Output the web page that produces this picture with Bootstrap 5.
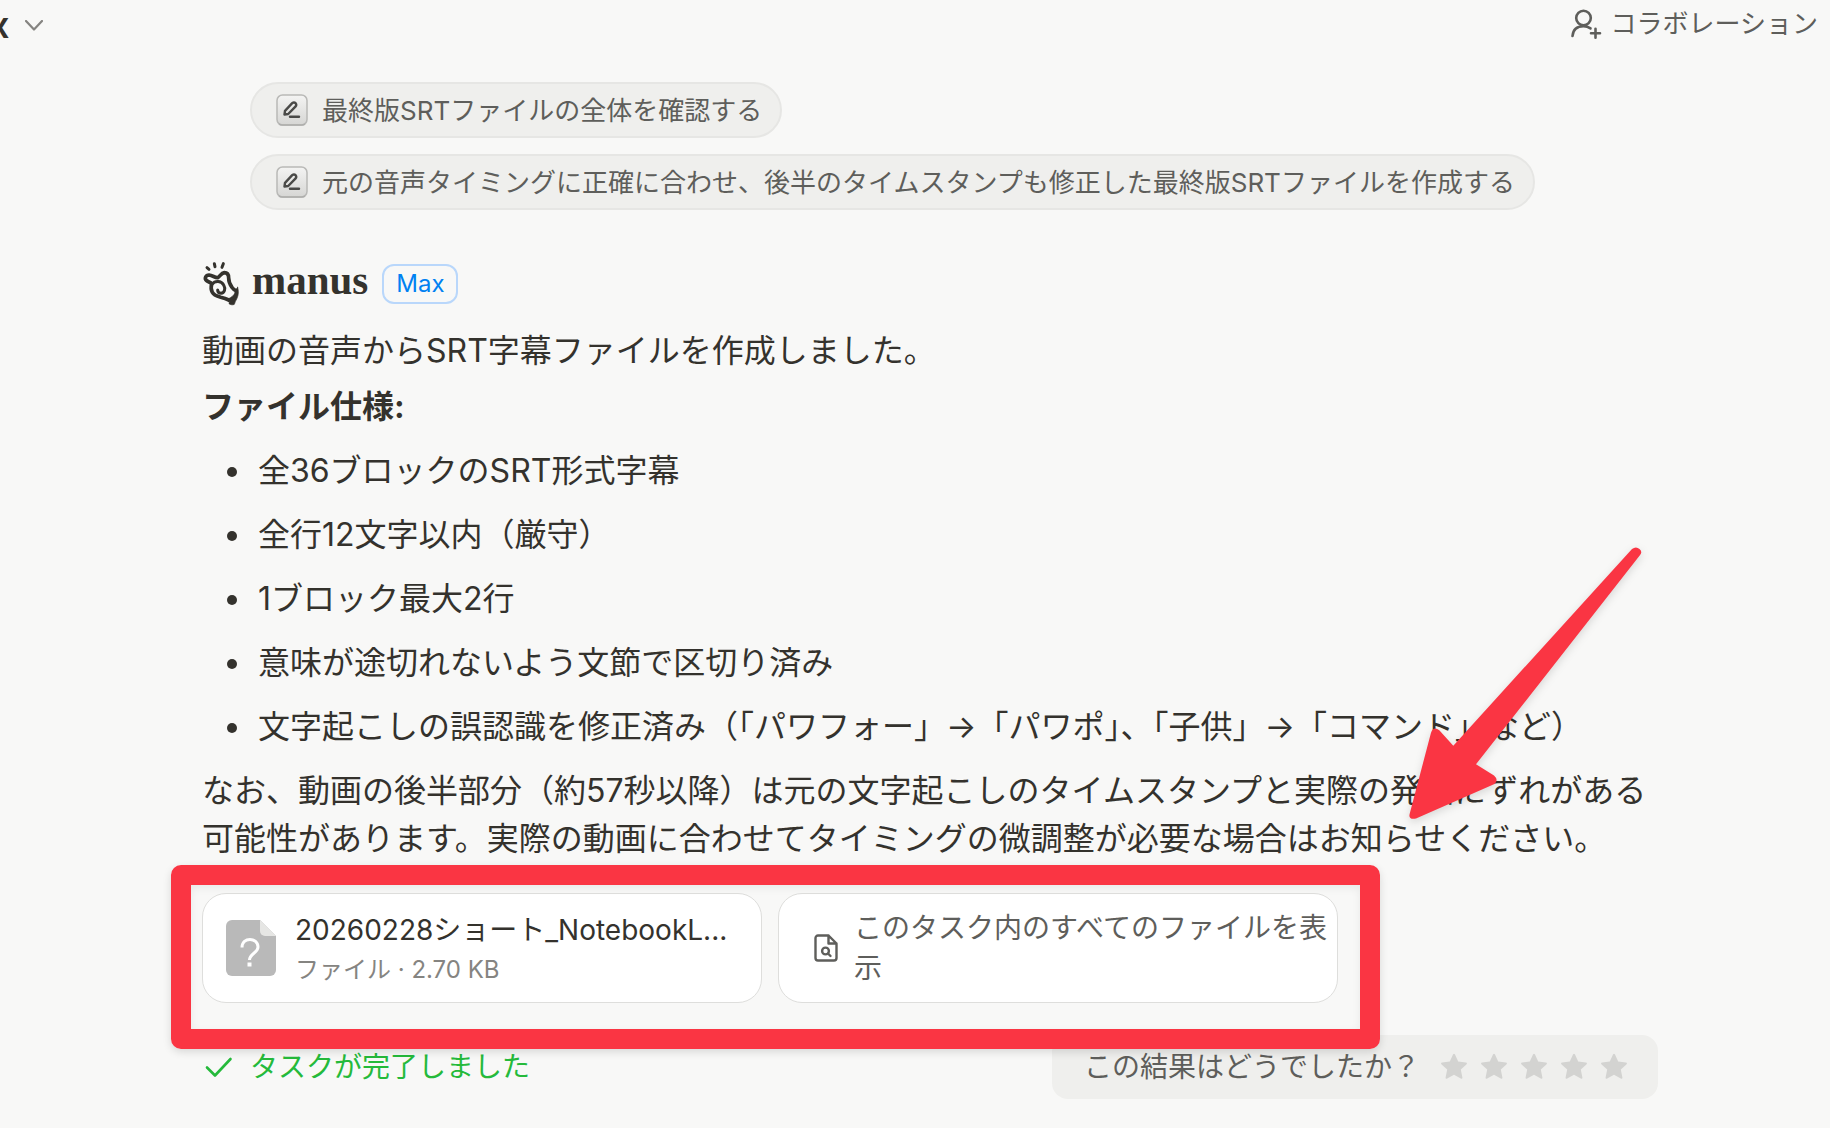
<!DOCTYPE html>
<html lang="ja">
<head>
<meta charset="utf-8">
<meta name="viewport" content="width=device-width, initial-scale=1">
<title>manus</title>
<link rel="stylesheet" href="https://cdn.jsdelivr.net/npm/bootstrap@5.3.0/dist/css/bootstrap.min.css">
<style>
:root{--ink:#34322d;--ink-2:#5e5e5b;--ink-3:#858481;--line:#e6e6e4;--fill:#efefed;--mark-red:#fa3543}
body{background:#f8f8f7;color:var(--ink);font-family:Inter,"Noto Sans CJK JP",sans-serif;font-size:32px;line-height:48px;font-feature-settings:"chws" 1;min-height:100vh;overflow-x:hidden}
svg{display:block;flex:none}
.topbar{height:50px;padding-right:12px}
.topbar button{color:var(--ink-2);font-size:26px;line-height:32px}
.model-switch{margin-left:-11px}
.model-switch span{color:var(--ink);font-size:36px;font-weight:600}
.collab{padding-bottom:2px}
.thread{max-width:1456px;margin-left:202px;margin-right:172px;padding-top:32px}
.steps{padding-left:48px;gap:16px;margin-bottom:48px}
.step-chip{min-height:56px;padding:0 18px 0 24px;gap:14px;border:2px solid var(--line);border-radius:28px;background:var(--fill);color:var(--ink-2);font-size:26px;line-height:32px}
.step-chip span{padding-top:2px}
.brand{height:50px;margin-bottom:18px}
.brand-name{font-family:"Liberation Serif",serif;font-weight:700;font-size:41px;line-height:40px;margin:0 14px 0 13px;padding-bottom:6px}
.plan{border:2px solid #b9d7fb;border-radius:12px;color:#0081f2;font-size:24px;line-height:36px;padding:0 12px;margin-top:2px}
.answer{padding-top:1px}
.answer p{margin-bottom:8px}
.answer ul{padding-left:52px;margin:16px 0}
.answer li{padding-left:4px;margin-bottom:16px}
.files{gap:16px;margin-top:30px}
.file-card{width:560px;height:110px;background:#fff;border:1px solid #dededc;border-radius:24px;color:var(--ink-2);font-size:28px;line-height:40px;text-align:left}
.file-one{padding:0 23px;gap:19px}
.file-all{padding:0 7px 0 35px;gap:16px}
.file-name{color:var(--ink);line-height:40px;padding-top:4px}
.file-meta{color:var(--ink-3);font-size:24px;line-height:40px}
.red-frame{position:absolute;inset:-28px -42px -46px -31px;border:20px solid var(--mark-red);border-radius:10px;box-shadow:0 3px 8px #0002,inset 0 3px 8px #0001;pointer-events:none;z-index:2}
.red-arrow{position:absolute;left:1203px;top:-352px;z-index:3;filter:drop-shadow(0 3px 4px #0002);pointer-events:none}
.status{margin-top:32px}
.done{color:#25ba3b;font-size:28px;line-height:40px;gap:16px}
.rating{background:var(--fill);border-radius:16px;height:64px;padding:0 24px 0 32px;gap:14px;color:var(--ink-2);font-size:28px}
.rating button{width:40px;color:#d3d3d1}
</style>
</head>
<body>
<svg width="0" height="0" class="position-absolute" aria-hidden="true">
  <defs>
    <linearGradient id="key" x2="0" y2="1"><stop offset="0" stop-color="#f4f4f3"/><stop offset="1" stop-color="#d6d6d4"/></linearGradient>
    <symbol id="pen" viewBox="0 0 32 32"><rect x="1" y="1" width="30" height="30" rx="5.500" fill="url(#key)" stroke="#b9b9b7" stroke-width="1.500"/><path d="M3 30q1 1 3 1h20q2 0 3-1" fill="none" stroke="#aeaeac" stroke-width="1.500"/><path d="M8.500 20.500L9 16.800 16.200 9.200Q18 7.600 19.600 9.200 21 10.800 19.400 12.600L12.200 20Z" fill="none" stroke="#4a4a48" stroke-width="2.400" stroke-linejoin="round"/><path d="M14 22.800h9" stroke="#4a4a48" stroke-width="2.400" stroke-linecap="round"/></symbol>
    <symbol id="star" viewBox="0 0 28 28"><path d="M13 1.600q1-1.800 2 0l3.200 7 7.600.9q2 .3.600 1.900l-5.600 5.200 1.600 7.800q.2 2-1.600 1.200L14 21.800l-6.800 3.800q-1.800.8-1.600-1.200l1.600-7.800L1.600 11.400Q.2 9.800 2.200 9.500l7.600-.9z" fill="currentColor"/></symbol>
  </defs>
</svg>
<header class="topbar d-flex justify-content-between align-items-center">
  <button class="btn border-0 p-0 d-flex align-items-center gap-3 model-switch"><span>x</span>
    <svg width="18" height="11" viewBox="0 0 18 11" fill="none" stroke="#858481" stroke-width="2.200" stroke-linecap="round" stroke-linejoin="round"><path d="M1 1l8 8.500L17 1"/></svg></button>
  <button class="btn border-0 px-0 pt-0 d-flex align-items-center gap-2 collab">
    <svg width="32" height="32" viewBox="0 0 32 32" fill="none" stroke="currentColor" stroke-width="2.600" stroke-linecap="round"><circle cx="12.500" cy="10" r="7.300"/><path d="M1.500 28C2 21.500 6 18.200 12.500 18.200c2.800 0 4.800.6 7 2.200M24.500 20.800v9M20 25.300h9"/></svg>
    コラボレーション</button>
</header>
<main class="thread">
  <div class="steps d-flex flex-column align-items-start">
    <div class="step-chip d-flex align-items-center"><svg width="32" height="32"><use href="#pen"/></svg><span>最終版SRTファイルの全体を確認する</span></div>
    <div class="step-chip d-flex align-items-center"><svg width="32" height="32"><use href="#pen"/></svg><span>元の音声タイミングに正確に合わせ、後半のタイムスタンプも修正した最終版SRTファイルを作成する</span></div>
  </div>
  <div class="brand d-flex align-items-center">
    <svg width="37" height="46" viewBox="6 6 111 138" fill="none" stroke="#34322d" stroke-width="11" stroke-linecap="round" stroke-linejoin="round"><path d="M21 29l6 5M43 17l2 9M70 17l-4 11" stroke-width="9"/><path d="M53 59C45 60 38 52 27 51 17 51 13 61 19 67c5 5 12 5 16 10-2 8-3 17 2 26 4 9 14 12 25 15 9 2 16 4 24 8M53 59c6-2 10-14 20-15 10 0 13 7 13 16 0 12 4 20 10 28 4 5 7 8 10 9"/><path d="M36 79c9-12 28-11 35 2 7 12 2 24-8 25-6 0-10-4-10-10" stroke-width="9"/><path d="M113 88c3 12 3 22-2 33-4 7-6 12-8 18-5 3-12 1-16-2 1-5 1-9-1-15 8-4 16-10 18-16 1-5 2-10 9-18z" fill="#34322d" stroke-width="2"/></svg>
    <span class="brand-name">manus</span><span class="plan">Max</span>
  </div>
  <article class="answer">
    <p>動画の音声からSRT字幕ファイルを作成しました。</p>
    <p class="fw-bold">ファイル仕様:</p>
    <ul>
      <li>全36ブロックのSRT形式字幕</li>
      <li>全行12文字以内（厳守）</li>
      <li>1ブロック最大2行</li>
      <li>意味が途切れないよう文節で区切り済み</li>
      <li>文字起こしの誤認識を修正済み（「パワフォー」→「パワポ」、「子供」→「コマンド」など）</li>
    </ul>
    <p class="mb-0">なお、動画の後半部分（約57秒以降）は元の文字起こしのタイムスタンプと実際の発話にずれがある可能性があります。実際の動画に合わせてタイミングの微調整が必要な場合はお知らせください。</p>
  </article>
  <div class="d-flex">
    <section class="files d-flex position-relative">
      <button class="file-card file-one d-flex align-items-center">
        <svg width="50" height="56" viewBox="0 0 50 56"><path d="M6 0h28l16 16v34a6 6 0 0 1-6 6H6a6 6 0 0 1-6-6V6a6 6 0 0 1 6-6z" fill="#b9b9b9"/><path d="M34 0l16 16H39a5 5 0 0 1-5-5z" fill="#e6e6e4"/><path d="M16 27.500c0-11 16-10.500 16-.5 0 6-8.500 6.500-8.500 13" fill="none" stroke="#fff" stroke-width="3"/><path d="M21.500 42.500h4v4h-4z" fill="#fff"/></svg>
        <span><span class="file-name d-block">20260228ショート_NotebookL...</span><span class="file-meta d-block">ファイル · 2.70 KB</span></span></button>
      <button class="file-card file-all d-flex align-items-center">
        <svg width="24" height="28" viewBox="0 0 24 28" fill="none" stroke="currentColor" stroke-width="2.400" stroke-linejoin="round" stroke-linecap="round"><path d="M14.500 1.500H4A2.500 2.500 0 0 0 1.500 4v20A2.500 2.500 0 0 0 4 26.500h16a2.500 2.500 0 0 0 2.500-2.500V9.500zM14.500 1.500v8h8"/><circle cx="11.500" cy="17" r="3.400"/><path d="M14 19.500l2.500 2.500"/></svg>
        <span>このタスク内のすべてのファイルを表示</span></button>
      <div class="red-frame"></div>
      <svg class="red-arrow" width="240" height="284" viewBox="0 0 240 284" fill="#fa3543"><path d="M227 8Q231 5 234.500 8T234.700 14.500L71 223.300 89 234.500Q94 239 89.500 243L11 277.500Q3 279 4.700 272.700L26 191.700Q28.500 185 34.300 189.300L48.300 204.700Z"/></svg>
    </section>
  </div>
  <div class="status d-flex justify-content-between align-items-center">
    <div class="done d-flex align-items-center"><svg width="32" height="32" viewBox="0 0 32 32" fill="none" stroke="currentColor" stroke-width="2.600" stroke-linecap="round" stroke-linejoin="round"><path d="M5 16.500l8 8L28.500 8"/></svg>タスクが完了しました</div>
    <div class="rating d-flex align-items-center"><span>この結果はどうでしたか？</span>
      <div class="d-flex">
        <button class="btn border-0 p-0 d-flex justify-content-center" aria-label="1"><svg width="28" height="28"><use href="#star"/></svg></button>
        <button class="btn border-0 p-0 d-flex justify-content-center" aria-label="2"><svg width="28" height="28"><use href="#star"/></svg></button>
        <button class="btn border-0 p-0 d-flex justify-content-center" aria-label="3"><svg width="28" height="28"><use href="#star"/></svg></button>
        <button class="btn border-0 p-0 d-flex justify-content-center" aria-label="4"><svg width="28" height="28"><use href="#star"/></svg></button>
        <button class="btn border-0 p-0 d-flex justify-content-center" aria-label="5"><svg width="28" height="28"><use href="#star"/></svg></button>
      </div></div>
  </div>
</main>
<script src="https://cdn.jsdelivr.net/npm/bootstrap@5.3.0/dist/js/bootstrap.bundle.min.js"></script>
</body>
</html>
